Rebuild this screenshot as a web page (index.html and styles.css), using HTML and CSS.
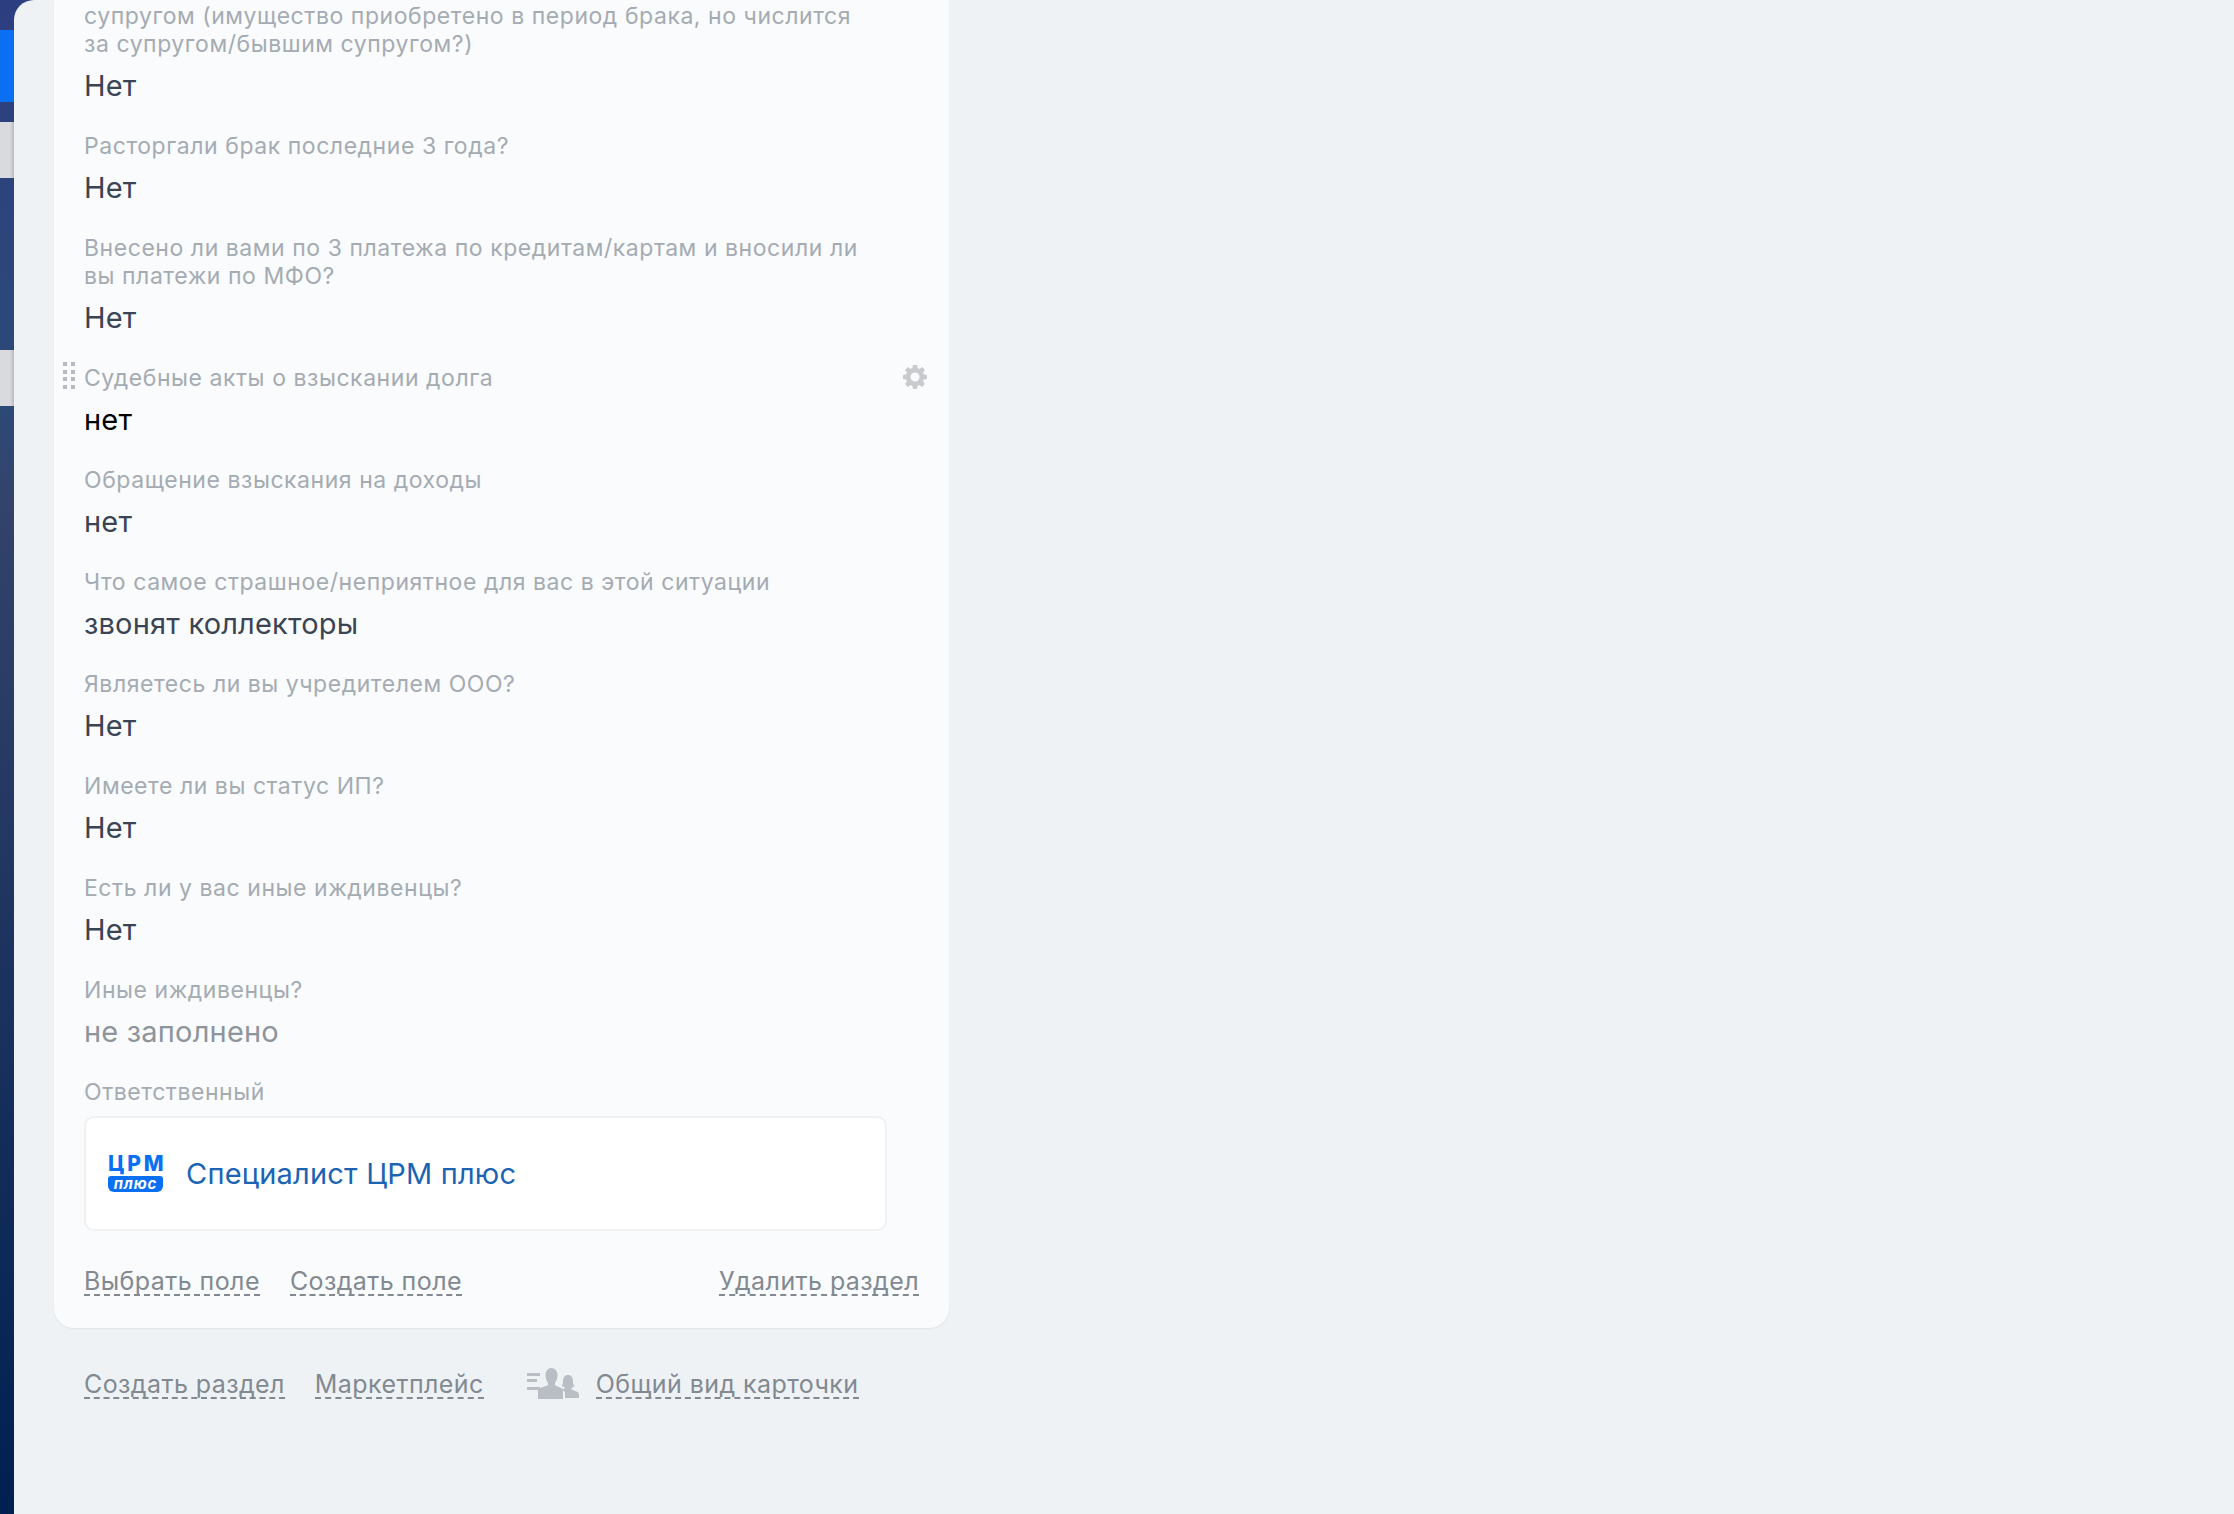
FILE: index.html
```html
<!DOCTYPE html>
<html lang="ru">
<head>
    <meta charset="UTF-8">
    <meta name="viewport" content="width=device-width, initial-scale=1.0">
    <title>Карточка</title>
    <link rel="stylesheet" href="styles.css">
</head>
<body>
    <div class="rail">
        <div class="rail-gap rail-gap-top"></div>
        <div class="rail-item rail-item-active"></div>
        <div class="rail-gap rail-gap-small"></div>
        <div class="rail-item rail-item-light"></div>
        <div class="rail-gap rail-gap-middle"></div>
        <div class="rail-item rail-item-light"></div>
    </div>
    <div class="content">
        <div class="section">
            <div class="field">
                <div class="field-label">супругом (имущество приобретено в период брака, но числится<br>за супругом/бывшим супругом?)</div>
                <div class="field-value">Нет</div>
            </div>
            <div class="field">
                <div class="field-label">Расторгали брак последние 3 года?</div>
                <div class="field-value">Нет</div>
            </div>
            <div class="field">
                <div class="field-label">Внесено ли вами по 3 платежа по кредитам/картам и вносили ли<br>вы платежи по МФО?</div>
                <div class="field-value">Нет</div>
            </div>
            <div class="field field-hover">
                <div class="drag-handle">
                    <span></span><span></span><span></span><span></span>
                    <span></span><span></span><span></span><span></span>
                </div>
                <div class="field-label">Судебные акты о взыскании долга</div>
                <div class="field-value field-value-dark">нет</div>
                <svg class="gear" viewBox="0 0 24 24">
                    <path fill-rule="evenodd" d="M10 0h4l.6 3.100 1.900.8L19.100 2.100l2.800 2.800-1.800 2.600.8 1.900 3.100.6v4l-3.100.6-.8 1.900 1.800 2.600-2.800 2.800-2.600-1.800-1.900.8L14 24h-4l-.6-3.100-1.900-.8-2.600 1.800-2.800-2.800 1.800-2.600-.8-1.900L0 14v-4l3.100-.6.8-1.900-1.800-2.600 2.800-2.800 2.600 1.800 1.900-.8zM12 7.500a4.500 4.500 0 1 0 0 9 4.500 4.500 0 0 0 0-9z"/>
                </svg>
            </div>
            <div class="field">
                <div class="field-label">Обращение взыскания на доходы</div>
                <div class="field-value">нет</div>
            </div>
            <div class="field">
                <div class="field-label">Что самое страшное/неприятное для вас в этой ситуации</div>
                <div class="field-value">звонят коллекторы</div>
            </div>
            <div class="field">
                <div class="field-label">Являетесь ли вы учредителем ООО?</div>
                <div class="field-value">Нет</div>
            </div>
            <div class="field">
                <div class="field-label">Имеете ли вы статус ИП?</div>
                <div class="field-value">Нет</div>
            </div>
            <div class="field">
                <div class="field-label">Есть ли у вас иные иждивенцы?</div>
                <div class="field-value">Нет</div>
            </div>
            <div class="field">
                <div class="field-label">Иные иждивенцы?</div>
                <div class="field-value field-value-empty">не заполнено</div>
            </div>
            <div class="field field-user">
                <div class="field-label">Ответственный</div>
                <div class="user-card">
                    <div class="user-logo">
                        <span class="user-logo-top">ЦРМ</span>
                        <span class="user-logo-bottom">плюс</span>
                    </div>
                    <a class="user-name" href="#">Специалист ЦРМ плюс</a>
                </div>
            </div>
            <div class="section-actions">
                <a class="dashed-link" href="#">Выбрать поле</a>
                <a class="dashed-link" href="#">Создать поле</a>
                <a class="dashed-link section-delete" href="#">Удалить раздел</a>
            </div>
        </div>
        <div class="page-actions">
            <a class="dashed-link" href="#">Создать раздел</a>
            <a class="dashed-link" href="#">Маркетплейс</a>
            <svg class="people-icon" viewBox="0 0 52 31">
                <path d="M0 5h13v3H0zM0 11h10v3H0zM0 19h13v3H0z"/>
                <path d="M24.500 0c3.800 0 6 3 6 7.500 0 3.400-1.200 5.800-2.500 7.200v2.600l7 3.200c.8.400 1 1 1 2V31H11v-8.500c0-1 .3-1.600 1-2l9-3.200v-2.600c-1.300-1.400-2.500-3.800-2.500-7.200 0-4.500 2.200-7.500 6-7.500z"/>
                <path d="M41 7c3 0 5 2.500 5 6 0 2.500.5 4 1.500 5.500l-3 1.500v1.500l6 2.500c1 .5 1.500 1.500 1.500 3V30H38v-4c0-2-1-3.500-3-4.500l2.500-1V19l-3-1c1-1 1.500-3 1.500-5 0-3.500 2-6 5-6z"/>
            </svg>
            <a class="dashed-link" href="#">Общий вид карточки</a>
        </div>
    </div>
</body>
</html>
```

FILE: styles.css
```css
body {
    margin: 0;
    display: flex;
    height: 1514px;
    overflow: hidden;
    background: linear-gradient(#2c3e80 0, #2c4a78 400px, #33436b 500px, #002050 100%);
    font-family: 'Inter', sans-serif;
    color: #3a4454;
}
.rail {
    width: 14px;
    flex-shrink: 0;
    display: flex;
    flex-direction: column;
}
.rail-gap-top {
    height: 30px;
}
.rail-gap-small {
    height: 20px;
}
.rail-gap-middle {
    height: 172px;
}
.rail-item {
    height: 72px;
}
.rail-item-active {
    background-color: #0a6ff2;
}
.rail-item-light {
    height: 56px;
    background: linear-gradient(to right, #d9dade 70%, #b9babf);
}
.content {
    flex: 1;
    background-color: #eef2f5;
    border-top-left-radius: 20px;
    padding: 0 40px;
    overflow: hidden;
}
.section {
    width: 895px;
    padding: 2px 0 32px;
    background-color: #f9fbfd;
    border-radius: 0 0 20px 20px;
    box-shadow: 0 1px 2px rgba(0, 0, 0, 0.06);
}
.field {
    position: relative;
    padding: 0 30px 13px;
    margin-bottom: 13px;
}
.field-label {
    font-size: 23px;
    line-height: 28px;
    letter-spacing: 0.55px;
    color: #a5abb3;
}
.field-value {
    margin-top: 7px;
    font-size: 29px;
    line-height: 41px;
    letter-spacing: 0.2px;
}
.field-value-dark {
    color: #000;
}
.field-value-empty {
    color: #8e949c;
}
.drag-handle {
    position: absolute;
    left: 9px;
    top: -2px;
    display: grid;
    grid-template-columns: 4px 4px;
    gap: 3.500px 4px;
}
.drag-handle span {
    height: 4px;
    background-color: #b7bbc1;
}
.gear {
    position: absolute;
    right: 22px;
    top: 1px;
    width: 24px;
    height: 24px;
    fill: #c8cacd;
}
.field-user {
    padding-bottom: 0;
    margin-bottom: 33px;
}
.user-card {
    margin-top: 10px;
    width: 803px;
    height: 115px;
    box-sizing: border-box;
    padding: 0 22px;
    display: flex;
    align-items: center;
    gap: 23px;
    background-color: #fff;
    border: 2px solid #eff1f3;
    border-radius: 10px;
}
.user-logo {
    width: 55px;
    display: flex;
    flex-direction: column;
    gap: 3px;
    text-align: center;
}
.user-logo-top {
    font-size: 21px;
    font-weight: 800;
    line-height: 18px;
    letter-spacing: 2.800px;
    margin-right: -2.800px;
    color: #0a6ff2;
}
.user-logo-bottom {
    font-size: 15px;
    font-weight: 700;
    font-style: italic;
    line-height: 16px;
    letter-spacing: 0.8px;
    color: #fff;
    background-color: #0a6ff2;
    border-radius: 3px 3px 6px 6px;
}
.user-name {
    font-size: 29px;
    letter-spacing: 0.2px;
    color: #1b64b4;
    text-decoration: none;
}
.section-actions {
    display: flex;
    gap: 30px;
    padding: 0 30px;
}
.section-delete {
    margin-left: auto;
}
.dashed-link {
    font-size: 25px;
    line-height: 26px;
    padding-top: 4px;
    letter-spacing: 0.42px;
    color: #828991;
    text-decoration: none;
    border-bottom: 2px dashed #828991;
}
.page-actions {
    display: flex;
    align-items: center;
    gap: 30px;
    padding: 39px 30px 0;
}
.people-icon {
    width: 52px;
    height: 31px;
    fill: #b9bec5;
    margin-left: 13px;
    margin-right: -13px;
}
```
